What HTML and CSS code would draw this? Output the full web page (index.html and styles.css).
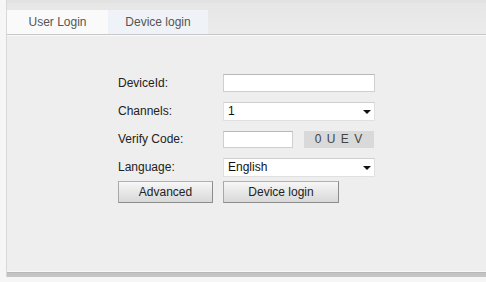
FILE: index.html
```html
<!DOCTYPE html>
<html lang="en">
<head>
    <meta charset="UTF-8">
    <title>Login</title>
    <link rel="stylesheet" href="styles.css">
</head>
<body>
    <div class="frame">
        <div class="tabs">
            <div class="tab user-tab">User Login</div>
            <div class="tab device-tab">Device login</div>
        </div>

        <div class="panel">
            <div class="login-form">
                <label>DeviceId:</label>
                <input type="text" class="field wide">

                <label>Channels:</label>
                <div class="select-box">
                    <select class="field wide">
                        <option>1</option>
                    </select>
                </div>

                <label>Verify Code:</label>
                <div class="verify">
                    <input type="text" class="field short">
                    <span class="code">0 U E V</span>
                </div>

                <label>Language:</label>
                <div class="select-box">
                    <select class="field wide">
                        <option>English</option>
                    </select>
                </div>

                <button class="btn advanced">Advanced</button>
                <button class="btn login">Device login</button>
            </div>
        </div>

        <div class="bottom"></div>
    </div>
</body>
</html>
```

FILE: styles.css
```css
* {
    margin: 0;
    padding: 0;
    box-sizing: border-box;
}
body {
    font-family: "Liberation Sans", Arial, sans-serif;
    font-size: 12px;
    color: #333;
    background: #f6f6f6;
    height: 282px;
    overflow: hidden;
}
.frame {
    margin-left: 6px;
    border-left: 1px solid #d8d8d8;
    height: 277px;
    display: flex;
    flex-direction: column;
}
.tabs {
    height: 35px;
    padding-top: 10px;
    display: flex;
    align-items: stretch;
    background: linear-gradient(#e2e2e2 0, #e2e2e2 2px, #e6e6e6 3px, #ebebeb 100%);
    border-bottom: 1px solid #c6c6c6;
}
.tab {
    display: flex;
    align-items: center;
    justify-content: center;
    color: #555;
    font-size: 12px;
}
.user-tab {
    width: 101px;
    background: #fafafa;
}
.device-tab {
    width: 100px;
    background: #eff2f6;
}
.panel {
    flex: 1;
    background: #eeeeee;
    border-top: 1px solid #fafafa;
    border-bottom: 1px solid #f7f7f7;
    padding: 33px 0 0 111px;
}
.login-form {
    display: grid;
    grid-template-columns: 105px 160px;
    grid-auto-rows: 28px;
    align-items: center;
}
.login-form label {
    color: #222;
}
.field {
    font-family: "Liberation Sans", Arial, sans-serif;
    font-size: 12px;
    color: #111;
    background: #fff;
    border: 1px solid #cfcfcf;
    border-top-color: #b8b8b8;
    outline: none;
}
.wide {
    width: 152px;
    height: 18px;
}
.short {
    width: 70px;
    height: 17px;
}
.select-box {
    position: relative;
    width: 152px;
}
.select-box select {
    appearance: none;
    -webkit-appearance: none;
    border-color: #e0e0e0;
    border-top-color: #cfcfcf;
    padding-left: 4px;
    height: 19px;
}
.select-box::after {
    content: "";
    position: absolute;
    right: 4px;
    top: 8px;
    border-left: 4px solid transparent;
    border-right: 4px solid transparent;
    border-top: 4px solid #111;
    pointer-events: none;
}
.verify {
    display: flex;
    align-items: center;
}
.code {
    margin-left: 11px;
    width: 70px;
    height: 17px;
    background: #d9d9d9;
    color: #444;
    letter-spacing: 1px;
    display: flex;
    align-items: center;
    justify-content: center;
}
.btn {
    align-self: start;
    height: 22px;
    font-family: "Liberation Sans", Arial, sans-serif;
    font-size: 12px;
    color: #222;
    background: linear-gradient(#f7f7f7, #e4e4e4 60%, #d9d9d9);
    border: 1px solid #8c8c8c;
    border-top-color: #b0b0b0;
    border-left-color: #a8a8a8;
}
.advanced {
    width: 95px;
}
.login {
    width: 116px;
}
.bottom {
    height: 5px;
    background: #c4c4c4;
    border-top: 1px solid #b8b8b8;
}
```
